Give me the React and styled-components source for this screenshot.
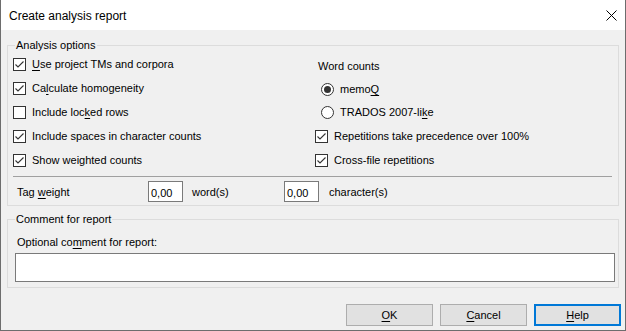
import React from 'react'
import styled, { createGlobalStyle } from "styled-components";

const GlobalStyle = createGlobalStyle`
  html, body {
    margin: 0;
    padding: 0;
    background: #f0f0f0;
  }
  * {
    box-sizing: border-box;
  }
`;

const Window = styled.div`
  width: 626px;
  height: 331px;
  display: flex;
  flex-direction: column;
  background-color: #f0f0f0;
  border: 1px solid #6d6d6d;
  border-top: none;
  font-family: "Liberation Sans", Arial, sans-serif;
  font-size: 11px;
  color: #000;
`;

const TitleBar = styled.header`
  height: 30px;
  flex: 0 0 30px;
  background-color: #fff;
  display: flex;
  align-items: center;
  justify-content: space-between;
  padding: 1px 8px 0 8px;
`;

const Title = styled.h1`
  margin: 0;
  font-family: "Liberation Sans", Arial, sans-serif;
  font-weight: normal;
  font-size: 12px;
`;

const Body = styled.section`
  flex: 1;
  display: flex;
  flex-direction: column;
  padding: 9px 4px 0 6px;
`;

const Group = styled.fieldset`
  margin: ${p => p.$top || 0}px 2px 0 0;
  border: 1px solid #dcdcdc;
  padding: ${p => p.$pad};
  min-width: 0;
`;

const Legend = styled.legend`
  margin-left: ${p => p.$indent}px;
  padding: 0 1px;
  line-height: 13px;
  height: 13px;
`;

const OptionsGrid = styled.div`
  display: grid;
  grid-template-columns: 302px 1fr;
  grid-auto-flow: column;
  grid-template-rows: repeat(5, 24px);
`;

const Option = styled.label`
  display: flex;
  align-items: center;
  gap: 6px;
  padding-left: ${p => p.$indent || 0}px;
  padding-top: ${p => p.$shift || 0}px;
  white-space: nowrap;
`;

const Heading = styled.div`
  display: flex;
  align-items: center;
  padding: 3px 0 0 3px;
`;

const Box = styled.span`
  width: 13px;
  height: 13px;
  flex: 0 0 13px;
  border: 1px solid #333;
  background: #fff;
  display: flex;
  align-items: center;
  justify-content: center;
`;

const Radio = styled.span`
  width: 13px;
  height: 13px;
  flex: 0 0 13px;
  border: 1px solid #333;
  border-radius: 50%;
  background: #fff;
  display: flex;
  align-items: center;
  justify-content: center;
  &::after {
    content: "";
    display: ${p => (p.$on ? "block" : "none")};
    width: 7px;
    height: 7px;
    border-radius: 50%;
    background: #333;
  }
`;

const Key = styled.span`
  text-decoration: underline;
  text-underline-offset: 2px;
`;

const Separator = styled.div`
  height: 1px;
  background: #a0a0a0;
  margin-top: 4px;
`;

const WeightRow = styled.div`
  display: flex;
  align-items: center;
  height: 21px;
  margin: 4px 0 3px;
  padding-left: 4px;
`;

const WeightLabel = styled.span`
  width: 131px;
`;

const NumberBox = styled.div`
  width: 35px;
  height: 21px;
  border: 1px solid #7a7a7a;
  background: #fff;
  padding: 5px 0 0 2px;
  line-height: 13px;
`;

const Unit = styled.span`
  margin-left: ${p => p.$gap}px;
  width: ${p => p.$w || "auto"};
`;

const CommentLabel = styled.div`
  margin: 10px 0 0 2px;
  line-height: 13px;
`;

const CommentBox = styled.div`
  margin-top: 4px;
  height: 29px;
  width: 600px;
  border: 1px solid #7a7a7a;
  background: #fff;
`;

const ButtonBar = styled.div`
  display: flex;
  justify-content: flex-end;
  gap: 7px;
  margin-top: 16px;
`;

const Button = styled.button`
  width: 87px;
  height: 22px;
  background: #e1e1e1;
  border: ${p => (p.$focus ? "2px solid #0078d7" : "1px solid #adadad")};
  font-family: "Liberation Sans", Arial, sans-serif;
  font-size: 11px;
  color: #000;
  padding: 0;
`;

const Check = () => (
  <svg width="11" height="11" viewBox="0 0 11 11">
    <polyline points="1.5,5.5 4,8 9.5,2.5" fill="none" stroke="#333" strokeWidth="1.1" />
  </svg>
);

const CheckBox = ({ on }) => <Box>{on && <Check />}</Box>;

const CloseIcon = () => (
  <svg width="11" height="11" viewBox="0 0 11 11">
    <path d="M0.5 0.5 L10.5 10.5 M10.5 0.5 L0.5 10.5" stroke="#000" strokeWidth="1" />
  </svg>
);

const App = () => (
  <Window>
    <GlobalStyle />
    <TitleBar>
      <Title>Create analysis report</Title>
      <CloseIcon />
    </TitleBar>
    <Body>
      <Group $pad="0 6px 0 5px">
        <Legend $indent={2}>Analysis options</Legend>
        <OptionsGrid>
          <Option><CheckBox on /><span><Key>U</Key>se project TMs and corpora</span></Option>
          <Option><CheckBox on /><span>Ca<Key>l</Key>culate homogeneity</span></Option>
          <Option><CheckBox /><span>Include loc<Key>k</Key>ed rows</span></Option>
          <Option><CheckBox on /><span>Include spaces in character counts</span></Option>
          <Option><CheckBox on /><span>Show weighted counts</span></Option>
          <Heading>Word counts</Heading>
          <Option $indent={6} $shift={2}><Radio $on /><span>memo<Key>Q</Key></span></Option>
          <Option $indent={6}><Radio /><span>TRADOS 2007-li<Key>k</Key>e</span></Option>
          <Option><CheckBox on /><span>Repetitions take precedence over 100%</span></Option>
          <Option><CheckBox on /><span>Cross-file repetitions</span></Option>
        </OptionsGrid>
        <Separator />
        <WeightRow>
          <WeightLabel>Tag <Key>w</Key>eight</WeightLabel>
          <NumberBox>0,00</NumberBox>
          <Unit $gap={9} $w="92px">word(s)</Unit>
          <NumberBox>0,00</NumberBox>
          <Unit $gap={10}>character(s)</Unit>
        </WeightRow>
      </Group>
      <Group $top={7} $pad="0 3px 5px 7px">
        <Legend $indent={0}>Comment for report</Legend>
        <CommentLabel>Optional co<Key>m</Key>ment for report:</CommentLabel>
        <CommentBox />
      </Group>
      <ButtonBar>
        <Button><Key>O</Key>K</Button>
        <Button><Key>C</Key>ancel</Button>
        <Button $focus><Key>H</Key>elp</Button>
      </ButtonBar>
    </Body>
  </Window>
)

export default App;
